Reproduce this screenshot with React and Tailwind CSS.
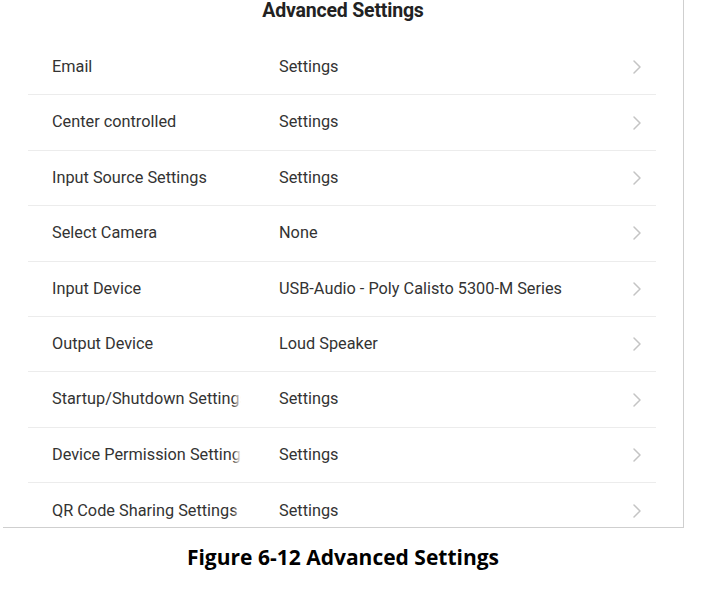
import React from 'react';

const rows = [
  { label: 'Email', value: 'Settings' },
  { label: 'Center controlled', value: 'Settings' },
  { label: 'Input Source Settings', value: 'Settings' },
  { label: 'Select Camera', value: 'None' },
  { label: 'Input Device', value: 'USB-Audio - Poly Calisto 5300-M Series' },
  { label: 'Output Device', value: 'Loud Speaker' },
  { label: 'Startup/Shutdown Settings', value: 'Settings' },
  { label: 'Device Permission Settings', value: 'Settings' },
  { label: 'QR Code Sharing Settings', value: 'Settings' },
];

const Chevron = () => (
  <svg width="10" height="16" viewBox="0 0 10 16" className="shrink-0">
    <polyline points="2,2 8,8 2,14" fill="none" stroke="#c4c4c4" strokeWidth="1.5" strokeLinecap="round" strokeLinejoin="round" />
  </svg>
);

const App = () => (
  <div className="w-[706px] h-[596px] bg-white relative overflow-hidden">
    {/* screenshot panel */}
    <div className="ml-[3px] w-[681px] h-[528px] border-r border-b border-[#cfcfcf] overflow-hidden font-['Roboto',sans-serif]">
      <div className="h-[40px] flex justify-center">
        <h1 className="text-[19.5px] leading-[22px] font-bold text-[#222] tracking-[-0.2px]">Advanced Settings</h1>
      </div>
      <div className="ml-[25px] w-[628px]">
        {rows.map((r, i) => (
          <div
            key={r.label}
            className={`h-[55.4px] flex items-center text-[16.3px] text-[#333] ${i < rows.length - 1 ? 'border-b border-[#ececec]' : ''}`}
          >
            <div className="relative ml-[24px] w-[189px] whitespace-nowrap overflow-hidden">
              {r.label}
              <div className="absolute right-0 top-0 bottom-0 w-[8px] bg-gradient-to-r from-transparent to-white" />
            </div>
            <div className="ml-[38px] flex-1 whitespace-nowrap">{r.value}</div>
            <div className="mr-[14px]">
              <Chevron />
            </div>
          </div>
        ))}
      </div>
    </div>
    <div className="mt-[16px] pr-[20px] text-center font-['Open_Sans','Liberation_Sans',sans-serif] font-bold text-[21px] text-black leading-[26px]">
      Figure 6-12 Advanced Settings
    </div>
  </div>
);

export default App;
